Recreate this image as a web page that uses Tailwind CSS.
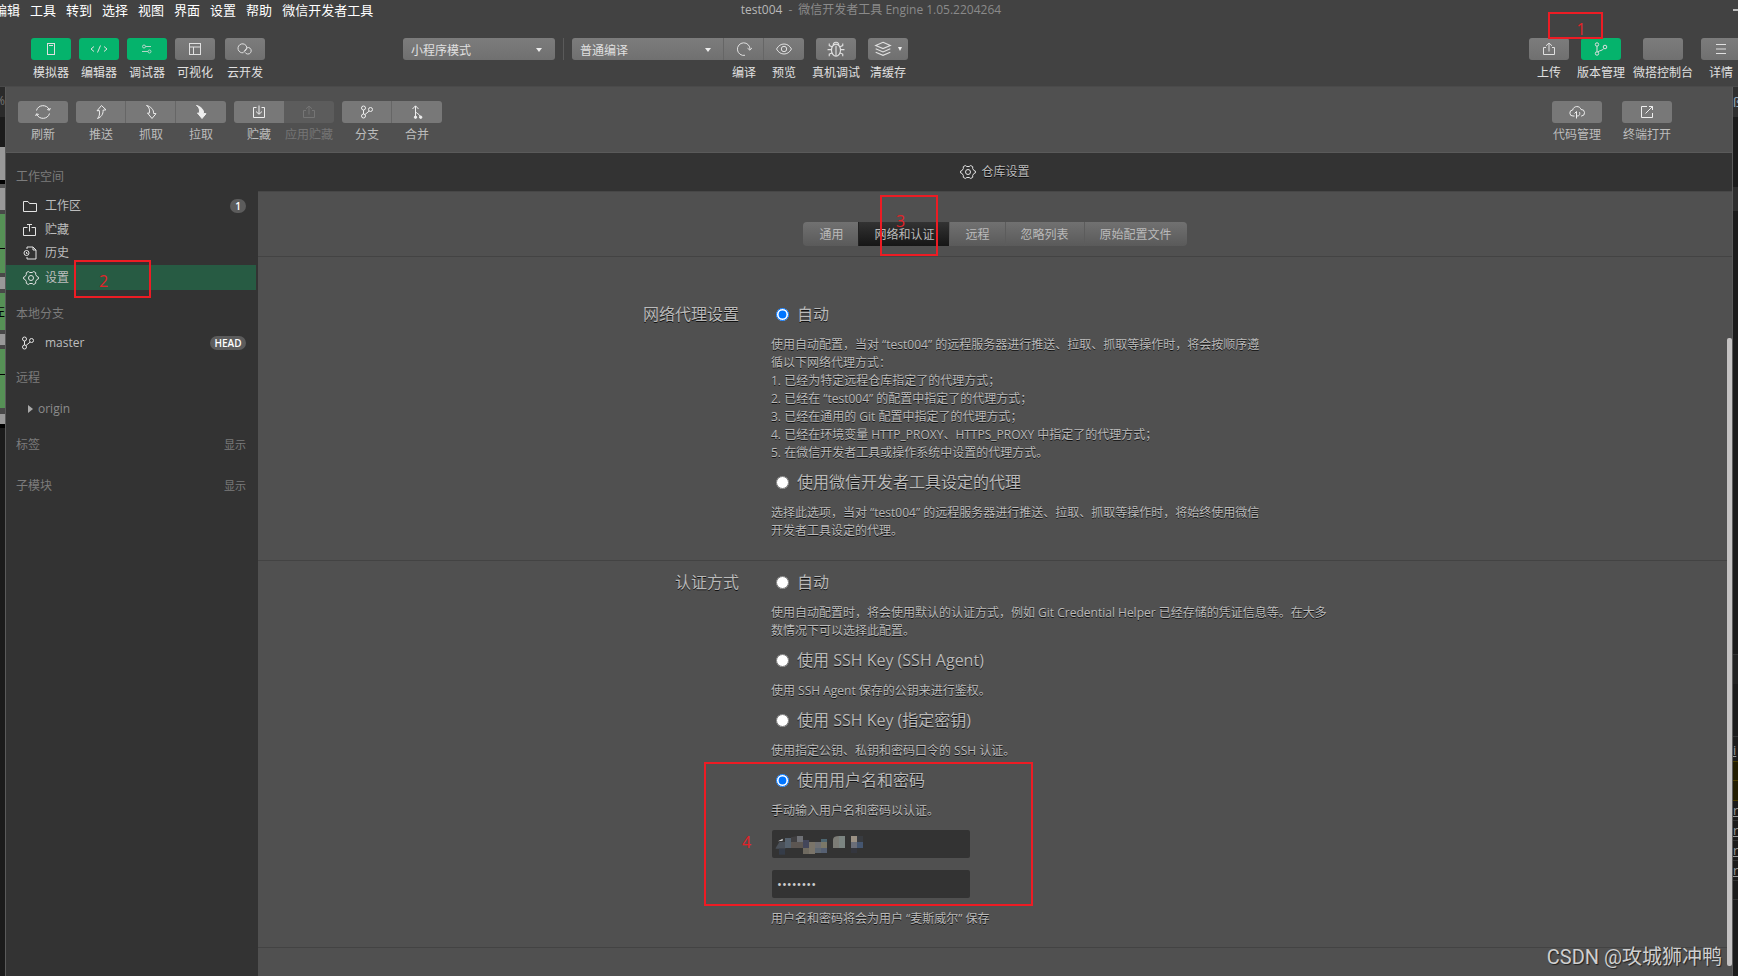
<!DOCTYPE html>
<html lang="zh-CN">
<head>
<meta charset="utf-8">
<title>test004 - 微信开发者工具</title>
<script src="https://cdn.jsdelivr.net/npm/@tailwindcss/browser@4"></script>
</head>
<body class="relative flex h-screen flex-col overflow-hidden bg-[#1b1b1b] font-['Open_Sans','Noto_Sans_CJK_SC',sans-serif] text-xs text-[#e0e0e0]">

<svg class="hidden" aria-hidden="true">
  <defs>
    <g id="i-phone"><rect x="4.5" y="2.5" width="7" height="11"/><path d="M6 4.5h4"/></g>
    <g id="i-code"><path d="M3 5.500 0 8l3 2.500M13 5.500 16 8l-3 2.500M9.500 4.500l-3 7"/></g>
    <g id="i-sliders"><circle cx="5" cy="5.500" r="1.500"/><path d="M6.500 5.500H12M3 10.500h6"/><circle cx="10.500" cy="10.500" r="1.500"/></g>
    <g id="i-layout"><rect x="2.500" y="2.500" width="11" height="11"/><path d="M2.500 6h11M6.500 6v7.500"/></g>
    <g id="i-cloud"><path d="M6.500 11.700A4.500 4.500 0 1 1 9.800 6C10 8.500 8.500 10 6.500 10.800M8 11.300A3.300 3.300 0 1 0 11.500 6.500C9.500 6.500 8.500 8.500 7.500 10"/></g>
    <g id="i-compile"><path d="M9 14.300A6.300 6.300 0 1 1 14 8.500M11.500 7.200l2.500 2 2-2.500"/></g>
    <g id="i-eye"><path d="M.5 8C2.500 4.500 5 3 8 3S13.500 4.500 15.500 8c-2 3.500-4.500 5-7.500 5S2.500 11.500.5 8Z"/><circle cx="8" cy="8" r="2.700"/></g>
    <g id="i-bug"><ellipse cx="8" cy="9" rx="4" ry="5.300"/><path d="M5.500 4.800C5.500 1 10.500 1 10.500 4.800M8 5v9M4 8.500H.5M12 8.500h3.500M4.500 6 2 5V3M11.500 6 14 5V3M4.500 11.500 2 12.500v2M11.500 11.500l2.500 1v2"/></g>
    <g id="i-stack"><path d="M8 2 14.500 4.800 8 7.600 1.500 4.800ZM1.500 7.800 8 10.600l6.500-2.800M1.500 10.800 8 13.600l6.500-2.800"/></g>
    <g id="i-upload"><path d="M5 6.500H2.500v7h11v-7H11M8 10.500V2M5 4.800 8 2l3 2.800"/></g>
    <g id="i-vcs"><circle cx="4" cy="3.500" r="1.700"/><circle cx="4" cy="12.500" r="1.700"/><circle cx="12" cy="6" r="1.800"/><path d="M4 5.200v5.600M5 11C6 9.500 10 9.500 10.800 7.500"/></g>
    <g id="i-menu"><path d="M3 3.500h10M3 8h10M3 12.500h10"/></g>
    <g id="i-refresh"><path d="M1.500 6.500C3 .5 12 -.2 14.500 6M12.200 5.500l2.300.7.800-2.200M14.500 9.500C13 15.500 4 16.200 1.500 10M3.800 10.500 1.500 9.800.7 12"/></g>
    <g id="i-push"><path d="M4.500 14.500C6.500 12.500 6.800 10 6.300 6.500L4 6.800 8.500 1.500 13 5.800l-3 .4C10.500 10 8 13.500 4.500 14.500Z"/></g>
    <g id="i-fetch"><path d="M3.500 1.500C6.500 3.500 6.800 6 6.300 9.200L4.500 9l4.500 5.500 4-4.800-2.500-.3C11 6 8 2.500 3.500 1.500Z"/></g>
    <g id="i-stash"><path d="M5.500 3.500h-3v10h11v-10h-3M8 1.500v8.500M5 7.500l3 2.800 3-2.800"/></g>
    <g id="i-branch"><circle cx="4.500" cy="4" r="2"/><circle cx="4.500" cy="12" r="2"/><circle cx="11.500" cy="5.500" r="2"/><path d="M4.500 6v4M6 10.500 10 7.200"/></g>
    <g id="i-merge"><path d="M6.500 13V2M3.500 5 6.500 1.800 9.500 5M6.500 7.500c.5 2 4 2 5 5.500"/><circle cx="6.500" cy="13.200" r="1.200" fill="currentColor"/><circle cx="11.700" cy="13.200" r="1.200" fill="currentColor"/></g>
    <g id="i-codecloud"><path d="M5.500 12H4a3 3 0 0 1-.3-6C4.500 1.500 11 1.500 12 5.500a3.200 3.200 0 0 1 .5 6.500H12M7.500 14.500v-7M5.500 9.500l2-2M8 12c3 0 3-2 2.500-4"/></g>
    <g id="i-open"><path d="M8 2.500H2.500v11h11V9M10 2.500h3.500V6M13.500 2.500 6.500 9.500"/></g>
    <g id="i-folder"><path d="M1.500 3.500h4.500l1.500 2h7v8h-13Z"/></g>
    <g id="i-shelf"><path d="M5.500 5.500h-4v8h12v-8h-4M7.500 9.500v-7M5 2.500h5"/></g>
    <g id="i-history"><path d="M5 4V2h6l3 3v9H5v-2M11 2v3h3"/><circle cx="4.500" cy="8" r="2.500"/><path d="M4.500 7v1.500h1"/></g>
    <g id="i-gear"><path d="m5.300 1.500 1.500 1h2.400l1.500-1 2 1.200v1.900l1.300 2 1.500.6v1.600l-1.500.6-1.300 2v1.900l-2 1.200-1.500-1H6.800l-1.500 1-2-1.200v-1.900L2 9.400l-1.500-.6V7.200L2 6.600l1.300-2V2.700Z"/><circle cx="8" cy="8" r="2.500"/></g>
  </defs>
</svg>

<header class="h-[87px] shrink-0 border-b border-[#4a4a4a] bg-[#424242]">
  <div class="relative flex h-5 items-center">
    <nav class="-ml-1.5 flex gap-2.5 text-[13px] leading-5 whitespace-nowrap text-white">
      <a href="#">编辑</a><a href="#">工具</a><a href="#">转到</a><a href="#">选择</a><a href="#">视图</a><a href="#">界面</a><a href="#">设置</a><a href="#">帮助</a><a href="#">微信开发者工具</a>
    </nav>
    <h1 class="pointer-events-none absolute inset-x-0 flex justify-center gap-1.5 pl-1 text-xs leading-5 text-[#8a8a8a]"><span class="text-[#b8b8b8]">test004</span><span>-</span><span>微信开发者工具 Engine 1.05.2204264</span></h1>
    <button class="ml-auto h-0.5 w-[5px] bg-[#bbb]" aria-label="最小化"></button>
  </div>

  <div class="flex items-start pt-[18px] pl-[31px] whitespace-nowrap">
    <div class="flex gap-2">
      <button class="flex w-10 flex-col items-center"><span class="grid h-[22px] w-10 place-items-center rounded-[3px] bg-[#05b36c]"><svg class="size-4 fill-none stroke-current" viewBox="0 0 16 16"><use href="#i-phone"/></svg></span><span class="mt-1 leading-[18px]">模拟器</span></button>
      <button class="flex w-10 flex-col items-center"><span class="grid h-[22px] w-10 place-items-center rounded-[3px] bg-[#05b36c]"><svg class="size-4 overflow-visible fill-none stroke-current" viewBox="0 0 16 16"><use href="#i-code"/></svg></span><span class="mt-1 leading-[18px]">编辑器</span></button>
      <button class="flex w-10 flex-col items-center"><span class="grid h-[22px] w-10 place-items-center rounded-[3px] bg-[#05b36c]"><svg class="size-4 fill-none stroke-current opacity-80" viewBox="0 0 16 16"><use href="#i-sliders"/></svg></span><span class="mt-1 leading-[18px]">调试器</span></button>
      <button class="flex w-10 flex-col items-center"><span class="grid h-[22px] w-10 place-items-center rounded-[3px] bg-linear-to-b from-[#7c7c7c] to-[#707070]"><svg class="size-4 fill-none stroke-current" viewBox="0 0 16 16"><use href="#i-layout"/></svg></span><span class="mt-1 leading-[18px]">可视化</span></button>
      <button class="ml-0.5 flex w-10 flex-col items-center"><span class="grid h-[22px] w-10 place-items-center rounded-[3px] bg-linear-to-b from-[#7c7c7c] to-[#707070]"><svg class="size-4 fill-none stroke-current" viewBox="0 0 16 16"><use href="#i-cloud"/></svg></span><span class="mt-1 leading-[18px]">云开发</span></button>
    </div>

    <div class="ml-[138px] flex items-start">
      <div class="relative h-[22px] w-[152px] rounded-[3px] bg-linear-to-b from-[#7c7c7c] to-[#707070]">
        <select aria-label="模式" class="h-full w-full appearance-none pt-1 pl-2 text-xs"><option>小程序模式</option></select>
        <span class="pointer-events-none absolute top-[10px] right-[13px] border-x-[3px] border-t-4 border-x-transparent border-t-[#eee]"></span>
      </div>
      <div class="mx-2 h-[22px] w-px bg-[#5a5a5a]"></div>
      <div class="flex gap-2">
        <div class="flex">
          <div class="relative h-[22px] w-[152px] rounded-l-[3px] border-r border-[#666] bg-linear-to-b from-[#7c7c7c] to-[#707070]">
            <select aria-label="编译模式" class="h-full w-full appearance-none pt-1 pl-2 text-xs"><option>普通编译</option></select>
            <span class="pointer-events-none absolute top-[10px] right-3 border-x-[3px] border-t-4 border-x-transparent border-t-[#eee]"></span>
          </div>
          <button class="flex w-10 flex-col items-center"><span class="grid h-[22px] w-10 place-items-center border-r border-[#666] bg-linear-to-b from-[#7c7c7c] to-[#707070]"><svg class="size-4 fill-none stroke-current" viewBox="0 0 16 16"><use href="#i-compile"/></svg></span><span class="mt-1 leading-[18px]">编译</span></button>
          <button class="flex w-10 flex-col items-center"><span class="grid h-[22px] w-10 place-items-center rounded-r-[3px] bg-linear-to-b from-[#7c7c7c] to-[#707070]"><svg class="size-4 fill-none stroke-current" viewBox="0 0 16 16"><use href="#i-eye"/></svg></span><span class="mt-1 leading-[18px]">预览</span></button>
        </div>
        <button class="flex w-12 flex-col items-center"><span class="grid h-[22px] w-10 place-items-center rounded-[3px] bg-linear-to-b from-[#7c7c7c] to-[#707070]"><svg class="size-[18px] fill-none stroke-current" viewBox="0 0 16 16"><use href="#i-bug"/></svg></span><span class="mt-1 leading-[18px]">真机调试</span></button>
        <button class="flex w-10 flex-col items-center"><span class="flex h-[22px] w-10 items-center justify-center gap-1.5 rounded-[3px] bg-linear-to-b from-[#7c7c7c] to-[#707070]"><svg class="size-[18px] fill-none stroke-current" viewBox="0 0 16 16"><use href="#i-stack"/></svg><span class="border-x-2 border-t-4 border-x-transparent border-t-[#eee]"></span></span><span class="mt-1 leading-[18px]">清缓存</span></button>
      </div>
    </div>

    <div class="-mr-[3px] ml-auto flex gap-2">
      <button class="flex w-10 flex-col items-center"><span class="grid h-[22px] w-10 place-items-center rounded-[3px] bg-linear-to-b from-[#7c7c7c] to-[#707070]"><svg class="size-4 fill-none stroke-current" viewBox="0 0 16 16"><use href="#i-upload"/></svg></span><span class="mt-1 leading-[18px]">上传</span></button>
      <button class="flex w-12 flex-col items-center"><span class="grid h-[22px] w-10 place-items-center rounded-[3px] bg-[#05b36c]"><svg class="size-4 fill-none stroke-current" viewBox="0 0 16 16"><use href="#i-vcs"/></svg></span><span class="mt-1 leading-[18px]">版本管理</span></button>
      <button class="flex w-15 flex-col items-center"><span class="h-[22px] w-10 rounded-[3px] bg-linear-to-b from-[#7c7c7c] to-[#707070]"></span><span class="mt-1 leading-[18px]">微搭控制台</span></button>
      <button class="flex w-10 flex-col items-center"><span class="grid h-[22px] w-10 place-items-center rounded-[3px] bg-linear-to-b from-[#7c7c7c] to-[#707070]"><svg class="size-4 fill-none stroke-current" viewBox="0 0 16 16"><use href="#i-menu"/></svg></span><span class="mt-1 leading-[18px]">详情</span></button>
    </div>
  </div>
</header>

<div class="flex min-h-0 flex-1">
  <!-- sliver of the window behind, left side -->
  <div class="w-[5px] shrink-0 overflow-hidden bg-[#1b1b1b]" aria-hidden="true">
    <div class="flex h-[30px] justify-end bg-[#2a2a2a] pt-2 text-xs leading-3 text-[#777]">%</div>
    <div class="h-[30px] bg-[#1b1b1b]"></div>
    <div class="h-[33px] bg-[#999]"></div>
    <div class="h-1 bg-black"></div>
    <div class="h-1 bg-[#555]"></div>
    <div class="h-[22px] bg-[#999]"></div>
    <div class="h-1 bg-[#484848]"></div>
    <div class="h-[59px] bg-[#569156] pt-[34px]"><div class="h-px bg-black"></div></div>
    <div class="h-1 bg-[#484848]"></div>
    <div class="h-3 bg-[#999]"></div>
    <div class="h-1 bg-[#484848]"></div>
    <div class="flex h-[37px] items-center justify-end bg-[#569156] text-xs text-black">左</div>
    <div class="h-1 bg-[#484848]"></div>
    <div class="h-[11px] bg-[#999]"></div>
    <div class="h-1 bg-[#484848]"></div>
    <div class="h-[59px] bg-[#569156] pt-[25px]"><div class="h-px bg-black"></div></div>
    <div class="h-[6px] bg-[#484848]"></div>
    <div class="h-2.5 bg-[#999]"></div>
    <div class="h-1 bg-black"></div>
  </div>

  <div class="flex min-w-0 flex-1 flex-col border-x border-[#5a5a5a] bg-[#505050]">
    <div class="flex h-[66px] shrink-0 items-start gap-2 border-b border-[#5a5a5a] pt-3.5 pl-3 whitespace-nowrap text-[#bdbdbd]">
      <button class="w-[50px]"><span class="grid h-[22px] place-items-center rounded-[3px] bg-[#787878] text-[#eee]"><svg class="size-4 fill-none stroke-current" viewBox="0 0 16 16"><use href="#i-refresh"/></svg></span><span class="mt-[3px] block leading-[18px]">刷新</span></button>
      <div class="flex">
        <button class="w-[50px]"><span class="grid h-[22px] place-items-center rounded-l-[3px] border-r border-[#666] bg-[#787878] text-[#eee]"><svg class="size-4 fill-none stroke-current" viewBox="0 0 16 16"><use href="#i-push"/></svg></span><span class="mt-[3px] block leading-[18px]">推送</span></button>
        <button class="w-[50px]"><span class="grid h-[22px] place-items-center border-r border-[#666] bg-[#787878] text-[#eee]"><svg class="size-4 fill-none stroke-current" viewBox="0 0 16 16"><use href="#i-fetch"/></svg></span><span class="mt-[3px] block leading-[18px]">抓取</span></button>
        <button class="w-[50px]"><span class="grid h-[22px] place-items-center rounded-r-[3px] bg-[#787878] text-[#eee]"><svg class="size-4 fill-current stroke-current" viewBox="0 0 16 16"><use href="#i-fetch"/></svg></span><span class="mt-[3px] block leading-[18px]">拉取</span></button>
      </div>
      <div class="flex">
        <button class="w-[50px]"><span class="grid h-[22px] place-items-center rounded-l-[3px] bg-[#787878] text-[#eee]"><svg class="size-4 fill-none stroke-current" viewBox="0 0 16 16"><use href="#i-stash"/></svg></span><span class="mt-[3px] block leading-[18px]">贮藏</span></button>
        <button class="w-[50px] text-[#757575]" disabled><span class="grid h-[22px] place-items-center rounded-r-[3px] bg-[#5c5c5c]"><svg class="size-4 fill-none stroke-current" viewBox="0 0 16 16"><use href="#i-upload"/></svg></span><span class="mt-[3px] block leading-[18px]">应用贮藏</span></button>
      </div>
      <div class="flex">
        <button class="w-[50px]"><span class="grid h-[22px] place-items-center rounded-l-[3px] border-r border-[#666] bg-[#787878] text-[#eee]"><svg class="size-4 fill-none stroke-current" viewBox="0 0 16 16"><use href="#i-branch"/></svg></span><span class="mt-[3px] block leading-[18px]">分支</span></button>
        <button class="w-[50px]"><span class="grid h-[22px] place-items-center rounded-r-[3px] bg-[#787878] text-[#eee]"><svg class="size-4 fill-none stroke-current" viewBox="0 0 16 16"><use href="#i-merge"/></svg></span><span class="mt-[3px] block leading-[18px]">合并</span></button>
      </div>
      <div class="mr-15 ml-auto flex gap-5">
        <button class="w-[50px]"><span class="grid h-[22px] place-items-center rounded-[3px] bg-[#787878] text-[#eee]"><svg class="size-4 fill-none stroke-current" viewBox="0 0 16 16"><use href="#i-codecloud"/></svg></span><span class="mt-[3px] block leading-[18px]">代码管理</span></button>
        <button class="w-[50px]"><span class="grid h-[22px] place-items-center rounded-[3px] bg-[#787878] text-[#eee]"><svg class="size-4 fill-none stroke-current" viewBox="0 0 16 16"><use href="#i-open"/></svg></span><span class="mt-[3px] block leading-[18px]">终端打开</span></button>
      </div>
    </div>

    <div class="flex min-h-0 flex-1">
      <aside class="w-[252px] shrink-0 bg-[#333] pt-[15px] text-[#bdbdbd]">
        <h2 class="pl-2.5 leading-[18px] text-[#7c7c7c]">工作空间</h2>
        <nav class="mt-2 mr-0.5">
          <a href="#" class="flex h-6 items-center gap-[7px] pr-2.5 pl-4"><svg class="size-4 fill-none stroke-current text-[#e4e4e4]" viewBox="0 0 16 16"><use href="#i-folder"/></svg>工作区<span class="ml-auto h-3.5 w-4 rounded-full bg-[#5c5c5c] text-center text-[10px] leading-3.5 font-semibold text-white">1</span></a>
          <a href="#" class="flex h-[23px] items-center gap-[7px] pl-4"><svg class="size-4 fill-none stroke-current text-[#e4e4e4]" viewBox="0 0 16 16"><use href="#i-shelf"/></svg>贮藏</a>
          <a href="#" class="flex h-6 items-center gap-[7px] pl-4"><svg class="size-4 fill-none stroke-current text-[#e4e4e4]" viewBox="0 0 16 16"><use href="#i-history"/></svg>历史</a>
          <a href="#" class="flex h-[25px] items-center gap-[6px] bg-[#275b43] pl-[17px]"><svg class="size-4 fill-none stroke-current text-[#e4e4e4]" viewBox="0 0 16 16"><use href="#i-gear"/></svg>设置</a>
        </nav>
        <h2 class="mt-[15px] pl-2.5 leading-[18px] text-[#7c7c7c]">本地分支</h2>
        <a href="#" class="mt-2 flex h-6 items-center gap-[9px] pr-3 pl-3.5"><svg class="size-4 fill-none stroke-current text-[#e4e4e4]" viewBox="0 0 16 16"><use href="#i-branch"/></svg>master<span class="ml-auto h-3.5 w-9 rounded-full bg-[#5c5c5c] text-center text-[10px] leading-3.5 font-semibold text-white">HEAD</span></a>
        <h2 class="mt-3.5 pl-2.5 leading-[18px] text-[#7c7c7c]">远程</h2>
        <button class="mt-[13px] flex h-[18px] items-center gap-[5px] pl-[22px] text-[#8c8c8c]"><span class="border-y-4 border-l-[5px] border-y-transparent border-l-[#aaa]"></span>origin</button>
        <div class="mt-[18px] flex justify-between pr-3 pl-2.5 leading-[18px] text-[#7c7c7c]"><h2>标签</h2><button class="text-[11px]">显示</button></div>
        <div class="mt-[23px] flex justify-between pr-3 pl-2.5 leading-[18px] text-[#7c7c7c]"><h2>子模块</h2><button class="text-[11px]">显示</button></div>
      </aside>

      <main class="flex min-w-0 flex-1 flex-col text-[#bababa] [text-shadow:0_1px_0_rgba(0,0,0,0.8)]">
        <h2 class="flex h-[39px] shrink-0 items-center justify-center gap-[5px] border-b border-[#474747] bg-[#333]"><svg class="size-4 fill-none stroke-current text-[#e4e4e4]" viewBox="0 0 16 16"><use href="#i-gear"/></svg>仓库设置</h2>
        <div class="flex shrink-0 justify-center border-b border-[#434343] pt-[30px] pb-2.5">
          <div class="flex h-6 overflow-hidden rounded-[4px] bg-linear-to-b from-[#717171] to-[#5a5a5a]">
            <button class="border-l border-transparent px-[15px] pt-0.5">通用</button>
            <button class="border-l border-[#222] bg-linear-to-b from-[#333] to-[#161616] px-[15px] pt-0.5">网络和认证</button>
            <button class="border-l border-[#5c5c5c] px-[15px] pt-0.5">远程</button>
            <button class="border-l border-[#5c5c5c] px-[15px] pt-0.5">忽略列表</button>
            <button class="border-l border-[#5c5c5c] px-[15px] pt-0.5">原始配置文件</button>
          </div>
        </div>

        <div class="relative min-h-0 flex-1">
          <section class="grid grid-cols-[481fr_961fr] gap-x-8 border-b border-[#434343] pt-[45px] pb-5">
            <h3 class="text-right text-base leading-6">网络代理设置</h3>
            <div class="flex flex-col gap-2 leading-[18px]">
              <label class="mb-0.5 flex items-center pl-[5px] text-base leading-6"><input type="radio" name="proxy" checked class="mr-2 size-[13px] accent-[#0075ff]">自动</label>
              <p class="max-w-[494px]">使用自动配置，当对 “test004” 的远程服务器进行推送、拉取、抓取等操作时，将会按顺序遵循以下网络代理方式：<br>1. 已经为特定远程仓库指定了的代理方式；<br>2. 已经在 “test004” 的配置中指定了的代理方式；<br>3. 已经在通用的 Git 配置中指定了的代理方式；<br>4. 已经在环境变量 HTTP_PROXY、HTTPS_PROXY 中指定了的代理方式；<br>5. 在微信开发者工具或操作系统中设置的代理方式。</p>
              <label class="mb-0.5 flex items-center pl-[5px] text-base leading-6"><input type="radio" name="proxy" class="mr-2 size-[13px]">使用微信开发者工具设定的代理</label>
              <p class="max-w-[494px]">选择此选项，当对 “test004” 的远程服务器进行推送、拉取、抓取等操作时，将始终使用微信开发者工具设定的代理。</p>
            </div>
          </section>

          <section class="grid grid-cols-[481fr_961fr] gap-x-8 border-b border-[#434343] pt-[9px] pb-[19px]">
            <h3 class="text-right text-base leading-6">认证方式</h3>
            <div class="flex flex-col gap-2 leading-[18px]">
              <label class="mb-0.5 flex items-center pl-[5px] text-base leading-6"><input type="radio" name="auth" class="mr-2 size-[13px]">自动</label>
              <p class="max-w-[560px]">使用自动配置时，将会使用默认的认证方式，例如 Git Credential Helper 已经存储的凭证信息等。在大多数情况下可以选择此配置。</p>
              <label class="mb-0.5 flex items-center pl-[5px] text-base leading-6"><input type="radio" name="auth" class="mr-2 size-[13px]">使用 SSH Key (SSH Agent)</label>
              <p>使用 SSH Agent 保存的公钥来进行鉴权。</p>
              <label class="mb-0.5 flex items-center pl-[5px] text-base leading-6"><input type="radio" name="auth" class="mr-2 size-[13px]">使用 SSH Key (指定密钥)</label>
              <p>使用指定公钥、私钥和密码口令的 SSH 认证。</p>
              <label class="mb-0.5 flex items-center pl-[5px] text-base leading-6"><input type="radio" name="auth" checked class="mr-2 size-[13px] accent-[#0075ff]">使用用户名和密码</label>
              <p>手动输入用户名和密码以认证。</p>
              <div class="mt-0.5 flex flex-col items-start gap-3">
                <div class="relative ml-px">
                  <input type="text" aria-label="用户名" class="block h-7 w-[198px] rounded-[2px] bg-[#333] px-1.5">
                  <svg class="pointer-events-none absolute inset-0 h-7 w-[198px]" viewBox="0 0 594 84" aria-hidden="true">
                    <path fill="#4a5058" d="M11 54 22 36h18v20H11z"/><path fill="#d8d8d8" d="m18 34 14-8v6z"/>
                    <path fill="#353c48" d="M21 56h18v18H21z"/><path fill="#55616d" d="M39 24h18v30H39z"/>
                    <path fill="#403f41" d="M57 22l18-4v18H57z"/><path fill="#6e7075" d="M75 18h18v18H75z"/>
                    <path fill="#5c5652" d="M57 36h36v18H57z"/><path fill="#43465a" d="M93 30h18v24H93z"/>
                    <path fill="#6f6a60" d="M93 54h18v18H93z"/><path fill="#7a7469" d="M111 36h18v36h-18z"/>
                    <path fill="#6f7073" d="M129 36h18v18h-18z"/><path fill="#4d6570" d="M147 27h18v9h-18z"/>
                    <path fill="#7b7868" d="M147 36h18v18h-18z"/><path fill="#5f6872" d="M129 54h18v15h-18z"/>
                    <path fill="#566072" d="M147 54h18v15h-18z"/><path fill="#7c7c76" d="M183 28q2-10 18-10v36h-18z"/>
                    <path fill="#7c8582" d="M201 18h18v36h-18z"/><path fill="#9b9184" d="M237 18h18v18h-18z"/>
                    <path fill="#383b40" d="M255 18h18v18h-18z"/><path fill="#6b6e78" d="M237 36h18v18h-18z"/>
                    <path fill="#455670" d="M255 36h18v18h-18z"/><path fill="#34363e" d="M237 54h18v15h-18z"/>
                  </svg>
                </div>
                <input type="password" aria-label="密码" value="12345678" class="ml-px block h-7 w-[198px] rounded-[2px] bg-[#333] px-[5px] text-[13px] text-[#ccc]">
                <p>用户名和密码将会为用户 “麦斯威尔” 保存</p>
              </div>
            </div>
          </section>
          <div class="absolute top-[81px] right-0 bottom-2.5 w-[5px] rounded-[2px] bg-[#c4c2c2]" aria-hidden="true"></div>
        </div>
      </main>
    </div>
  </div>

  <!-- sliver of the window behind, right side -->
  <div class="w-[5px] shrink-0 overflow-hidden bg-[#1b1b1b] text-[13px] leading-[18px] text-[#999]" aria-hidden="true">
    <div class="h-[30px] bg-[#2f2f2f] pt-1.5 text-[#9ab]">ß</div>
    <div class="h-[70px]"></div>
    <div class="h-6 bg-[#2d2d2d]"></div>
    <div class="mt-[443px] h-[30px] border-t border-[#333] bg-[#222]"></div>
    <div class="h-[53px] border-b border-[#333]"></div>
    <div class="mt-1 h-5 underline">i</div>
    <div class="h-5 border-y border-[#4a3c00] bg-[#221c00]"></div>
    <div class="h-5 border-b border-[#4a3c00] bg-[#221c00]"></div>
    <div class="h-5 border-b border-[#333] underline">r</div>
    <div class="h-5 border-b border-[#333] underline">r</div>
    <div class="h-5 border-b border-[#333] underline">r</div>
    <div class="h-5 border-b border-[#333] underline">r</div>
    <div class="h-[19px] border-b border-[#333]"></div>
  </div>
</div>

<!-- numbered step marks laid over the window -->
<div class="pointer-events-none absolute inset-0 text-base leading-5 text-[#e32228]">
  <div class="absolute top-3 left-[1548px] h-[27px] w-[55px] border-2 border-[#ed1c24] pt-[5px] pl-[11px] text-center">1</div>
  <div class="absolute top-[260px] left-[74px] h-[38px] w-[77px] border-2 border-[#ed1c24] pt-[9px] pl-[23px]">2</div>
  <div class="absolute top-[195px] left-[880px] h-[61px] w-[58px] border-2 border-[#ed1c24] pt-3.5 pl-3.5">3</div>
  <div class="absolute top-[762px] left-[704px] h-[144px] w-[329px] border-2 border-[#ed1c24] pt-[68px] pl-9">4</div>
</div>
<div class="pointer-events-none absolute right-4 bottom-1 font-['Roboto','Noto_Sans_CJK_SC',sans-serif] text-xl leading-[30px] text-[#cfcfcf] [text-shadow:1px_1px_1px_rgba(0,0,0,0.6)]">CSDN @攻城狮冲鸭</div>
</body>
</html>
